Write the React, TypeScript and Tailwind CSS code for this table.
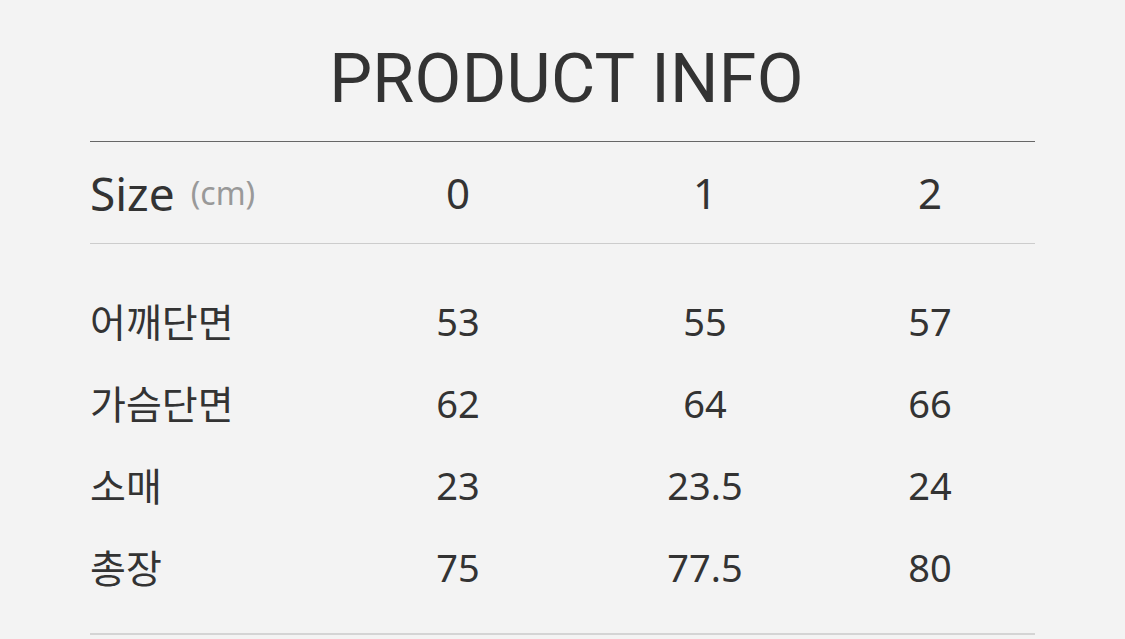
const rows = [
  { label: "어깨단면", values: ["53", "55", "57"] },
  { label: "가슴단면", values: ["62", "64", "66"] },
  { label: "소매", values: ["23", "23.5", "24"] },
  { label: "총장", values: ["75", "77.5", "80"] },
];

const font = { fontFamily: '"Noto Sans", "Noto Sans CJK KR", sans-serif' };

export default function App() {
  return (
    <div className="h-[639px] w-[1125px] overflow-hidden bg-[#f3f3f3] text-[#333]" style={font}>
      <div className="mx-[90px]">
        <h1 className="flex h-[141px] items-center justify-center pt-[16px] pl-[8px] font-['Roboto',sans-serif] text-[68px] font-normal leading-none tracking-[0.3px]">
          PRODUCT INFO
        </h1>
        <div className="border-t border-[#666]">
          <div className="grid h-[102px] grid-cols-[248px_240px_254px_196px] items-center border-b border-[#ccc]">
            <div className="flex items-center gap-[16px]">
              <span className="text-[46px] leading-none">Size</span>
              <span className="text-[32px] leading-none text-[#999]">(cm)</span>
            </div>
            <div className="text-center text-[42px] leading-none">0</div>
            <div className="text-center text-[42px] leading-none">1</div>
            <div className="text-center text-[42px] leading-none">2</div>
          </div>
          <div className="pt-[36px] pb-[25px] border-b-2 border-[#d4d4d4]">
            {rows.map((row) => (
              <div key={row.label} className="grid h-[82px] grid-cols-[248px_240px_254px_196px] items-center">
                <div className="text-[39px] leading-none">{row.label}</div>
                {row.values.map((v, i) => (
                  <div key={i} className="text-center text-[38px] leading-none">
                    {v}
                  </div>
                ))}
              </div>
            ))}
          </div>
        </div>
      </div>
    </div>
  );
}
